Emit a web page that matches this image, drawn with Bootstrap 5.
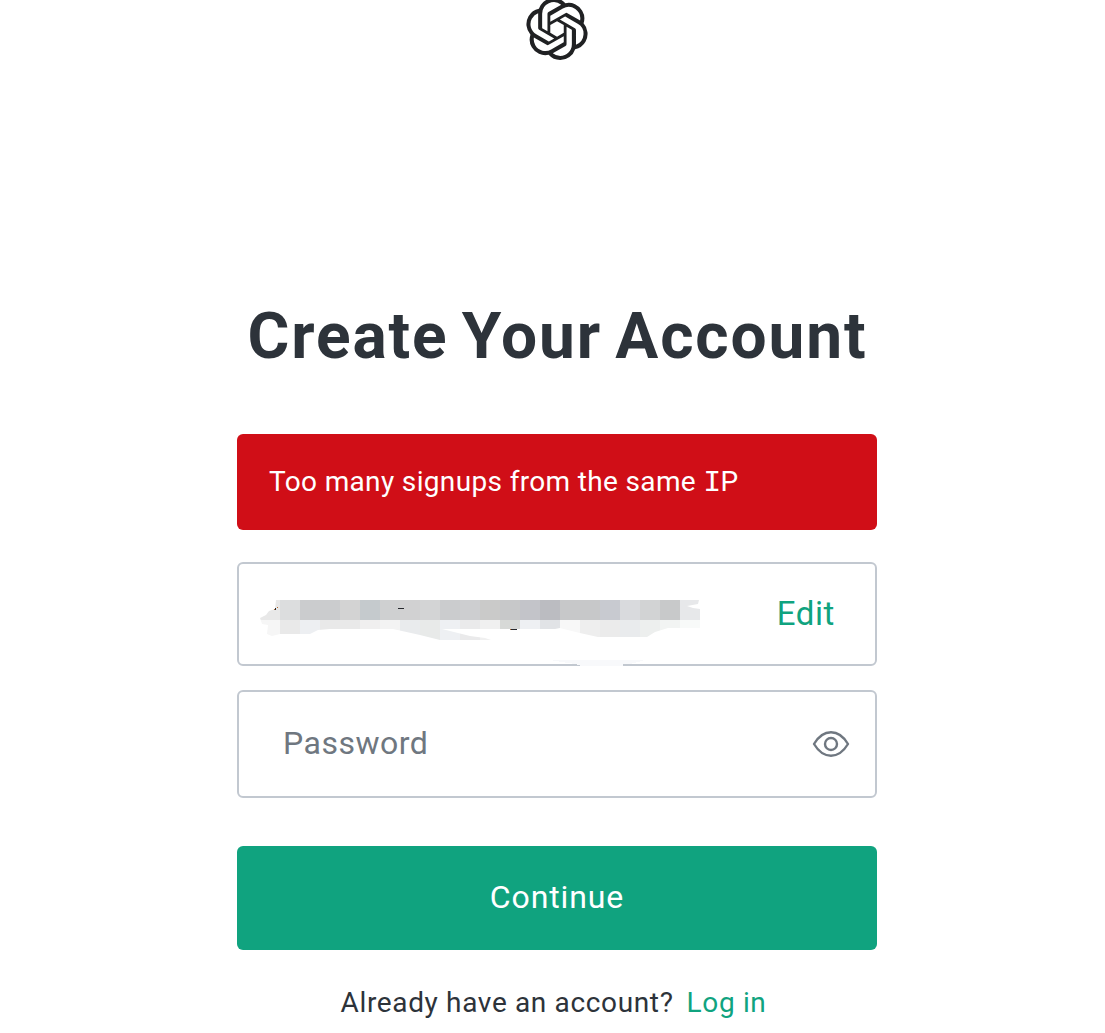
<!DOCTYPE html>
<html lang="en">
<head>
<meta charset="utf-8">
<meta name="viewport" content="width=device-width, initial-scale=1">
<title>Create Your Account</title>
<link href="https://cdn.jsdelivr.net/npm/bootstrap@5.3.0/dist/css/bootstrap.min.css" rel="stylesheet">
<style>
body{font-family:Roboto,"Liberation Sans",sans-serif;color:#2d333a;background:#fff;overflow:hidden}
.page-wrap{padding-left:9px}
.signup{width:640px}
.logo{display:block;width:62px;height:62px;margin-top:-2px;color:#202123}
.title{font-size:64px;font-weight:700;line-height:76px;margin:239px 0 59px;padding-left:1px;letter-spacing:1.85px;word-spacing:-4.5px;white-space:nowrap}
.error-box{height:96px;background:#d00e17;border-radius:6px;font-size:28px;padding:0 32px 1px;letter-spacing:.35px;margin-bottom:32px}
.cap-i{font-family:"Liberation Mono",monospace;font-size:30px;line-height:1;letter-spacing:-.8px}
.field{border:2px solid #c2c8d0;border-radius:6px}
.field-email{height:104px;padding:0 40px 0;margin-bottom:24px}
.field-pass{height:108px;padding:0 24px 0 44px;margin-bottom:48px}
.field-pass input{font-size:32px;color:#6f7780;letter-spacing:.5px;line-height:40px;margin-bottom:2px;outline:0}
.field-pass input::placeholder{color:#6f7780;opacity:1}
.green{color:#10a37f}
.edit{font-size:33px;letter-spacing:.6px}
.redaction{left:-2px;top:-2px}
.submit{height:104px;border-radius:6px;background:#10a37f;color:#fff;font-size:32px;letter-spacing:.9px;padding-bottom:8px}
.submit:hover{background:#0e8f6f;color:#fff}
.foot{font-size:28px;line-height:40px;margin-top:33px;gap:13px;padding-right:7px;letter-spacing:.65px}
</style>
</head>
<body>
<div class="page-wrap d-flex justify-content-center">
<main class="signup d-flex flex-column">
<svg class="logo mx-auto" viewBox="0 0 24 24" fill="currentColor" aria-label="OpenAI"><path d="M22.2819 9.8211a5.9847 5.9847 0 0 0-.5157-4.9108 6.0462 6.0462 0 0 0-6.5098-2.9A6.0651 6.0651 0 0 0 4.9807 4.1818a5.9847 5.9847 0 0 0-3.9977 2.9 6.0462 6.0462 0 0 0 .7427 7.0966 5.98 5.98 0 0 0 .511 4.9107 6.051 6.051 0 0 0 6.5146 2.9001A5.9847 5.9847 0 0 0 13.2599 24a6.0557 6.0557 0 0 0 5.7718-4.2058 5.9894 5.9894 0 0 0 3.9977-2.9001 6.0557 6.0557 0 0 0-.7475-7.0729zm-9.022 12.6081a4.4755 4.4755 0 0 1-2.8764-1.0408l.1419-.0804 4.7783-2.7582a.7948.7948 0 0 0 .3927-.6813v-6.7369l2.02 1.1686a.071.071 0 0 1 .038.052v5.5826a4.504 4.504 0 0 1-4.4945 4.4944zm-9.6607-4.1254a4.4708 4.4708 0 0 1-.5346-3.0137l.142.0852 4.783 2.7582a.7712.7712 0 0 0 .7806 0l5.8428-3.3685v2.3324a.0804.0804 0 0 1-.0332.0615L9.74 19.9502a4.4992 4.4992 0 0 1-6.1408-1.6464zM2.3408 7.8956a4.485 4.485 0 0 1 2.3655-1.9728V11.6a.7664.7664 0 0 0 .3879.6765l5.8144 3.3543-2.0201 1.1685a.0757.0757 0 0 1-.071 0l-4.8303-2.7865A4.504 4.504 0 0 1 2.3408 7.872zm16.5963 3.8558L13.1038 8.364 15.1192 7.2a.0757.0757 0 0 1 .071 0l4.8303 2.7913a4.4944 4.4944 0 0 1-.6765 8.1042v-5.6772a.79.79 0 0 0-.407-.667zm2.0107-3.0231l-.142-.0852-4.7735-2.7818a.7759.7759 0 0 0-.7854 0L9.409 9.2297V6.8974a.0662.0662 0 0 1 .0284-.0615l4.8303-2.7866a4.4992 4.4992 0 0 1 6.6802 4.66zM8.3065 12.863l-2.02-1.1638a.0804.0804 0 0 1-.038-.0567V6.0742a4.4992 4.4992 0 0 1 7.3757-3.4537l-.142.0805L8.704 5.459a.7948.7948 0 0 0-.3927.6813zm1.0976-2.3654l2.602-1.4998 2.6069 1.4998v2.9994l-2.5974 1.4997-2.6067-1.4997Z"/></svg>
<h1 class="title text-center">Create Your Account</h1>
<div class="error-box d-flex align-items-center text-white" role="alert"><span>Too many signups from the same <span class="cap-i">I</span>P</span></div>
<form>
<div class="field field-email position-relative d-flex align-items-center justify-content-end">
<!-- pixelated e-mail address and smudged lower border -->
<svg class="redaction position-absolute" width="640" height="104" viewBox="237 562 640 104" shape-rendering="crispEdges" aria-hidden="true">
<clipPath id="smudge"><path d="M276 600H699L698 604 687 606 693 608 700 609V628H668L655 632 647 637H598L580 633 560 628 555 629H442L470 636 485 638 491 640H440L420 635 393 629H330L318 630 310 634H280L272 636 267 634 268 625 262 624 260 618 266 615 269 611 275 609Z"/></clipPath>
<g clip-path="url(#smudge)">
<path fill="#e8e8e8" d="M260 600h20v20h-20z"/><path fill="#dcddde" d="M280 600h20v20h-20z"/><path fill="#cbccce" d="M300 600h40v20h-40z"/><path fill="#d3d3d3" d="M340 600h20v20h-20z"/><path fill="#c5cacd" d="M360 600h20v20h-20z"/><path fill="#cfd0d1" d="M380 600h20v20h-20z"/><path fill="#d1d1d2" d="M400 600h20v20h-20z"/><path fill="#d3d4d5" d="M420 600h20v20h-20z"/><path fill="#cbccce" d="M440 600h20v20h-20z"/><path fill="#cdced0" d="M460 600h20v20h-20z"/><path fill="#cacac9" d="M480 600h20v20h-20z"/><path fill="#c7c8c9" d="M500 600h20v20h-20z"/><path fill="#c3c4c9" d="M520 600h20v20h-20z"/><path fill="#bbbcc1" d="M540 600h20v20h-20z"/><path fill="#c7c8c9" d="M560 600h40v20h-40z"/><path fill="#c8cad0" d="M600 600h20v20h-20z"/><path fill="#d9dadd" d="M620 600h20v20h-20z"/><path fill="#d2d3d4" d="M640 600h20v20h-20z"/><path fill="#c8c9ca" d="M660 600h20v20h-20z"/><path fill="#e7e8ea" d="M680 600h20v20h-20z"/>
<path fill="#f6f6f6" d="M260 620h20v20h-20z"/><path fill="#e9e9e9" d="M280 620h20v20h-20z"/><path fill="#edeff2" d="M300 620h20v20h-20z"/><path fill="#e9e9e9" d="M320 620h40v20h-40z"/><path fill="#f0efef" d="M360 620h20v20h-20z"/><path fill="#f3f3f3" d="M380 620h20v20h-20z"/><path fill="#e9ebed" d="M400 620h20v20h-20z"/><path fill="#e8eae9" d="M420 620h20v20h-20z"/><path fill="#eef0f3" d="M440 620h20v20h-20z"/><path fill="#eaeaeb" d="M460 620h20v20h-20z"/><path fill="#f0f0f0" d="M480 620h20v20h-20z"/><path fill="#d7d9d7" d="M500 620h20v20h-20z"/><path fill="#eef0f3" d="M520 620h20v20h-20z"/><path fill="#e1e3e6" d="M540 620h20v20h-20z"/><path fill="#f8f8f8" d="M560 620h20v20h-20z"/><path fill="#eeeeee" d="M580 620h20v20h-20z"/><path fill="#ebebeb" d="M600 620h20v20h-20z"/><path fill="#e9ebed" d="M620 620h20v20h-20z"/><path fill="#edefee" d="M640 620h20v20h-20z"/><path fill="#f2f4f3" d="M660 620h20v20h-20z"/><path fill="#f8faf9" d="M680 620h20v20h-20z"/>
</g>
<path fill="#26292e" d="M398 608h6v1h-6zM511 629h6v1h-6zM275 608h1v2h-1z"/><path fill="#b5692e" d="M274 609h1v1h-1zM277 607h1v1h-1zM510 629h1v1h-1z"/>
<path fill="#fff" d="M582 664h41v2h-41z"/><path fill="#f8f9fb" d="M550 660H644L638 662 630 664H623V666H582L575 664 562 662Z"/>
</svg>
<a href="#" class="edit green text-decoration-none">Edit</a>
</div>
<div class="field field-pass d-flex align-items-center">
<input type="password" class="border-0 bg-transparent p-0 flex-grow-1" placeholder="Password" aria-label="Password">
<svg width="40" height="32" viewBox="0 0 40 32" fill="none" stroke="#6f7780" stroke-width="2.4" aria-hidden="true"><path d="M3 16C7.5 8.5 13 4.3 20 4.3S32.500 8.500 37 16C32.500 23.500 27 27.700 20 27.700S7.500 23.500 3 16Z" stroke-linejoin="round"/><circle cx="20" cy="16" r="6"/></svg>
</div>
<button type="button" class="submit btn w-100 border-0 d-flex align-items-center justify-content-center">Continue</button>
</form>
<div class="foot d-flex justify-content-center text-nowrap"><span>Already have an account?</span><a href="#" class="green text-decoration-none">Log in</a></div>
</main>
</div>
<script src="https://cdn.jsdelivr.net/npm/bootstrap@5.3.0/dist/js/bootstrap.bundle.min.js"></script>
</body>
</html>
